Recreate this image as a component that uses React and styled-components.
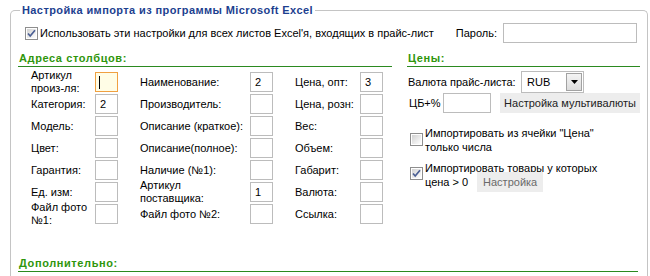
import styled, { createGlobalStyle } from "styled-components";

const GlobalStyle = createGlobalStyle`
  html, body { margin: 0; padding: 0; background: #fff; overflow: hidden; }
  body {
    font-family: "Liberation Sans", Arial, sans-serif;
    font-size: 11px;
    color: #000;
  }
`;

const Frame = styled.fieldset`
  box-sizing: border-box;
  margin: 3px 2px 0 10px;
  padding: 6px 7px 0 7px;
  height: 273px;
  border: 1px solid #c4c4c4;
  border-bottom: none;
  border-radius: 5px 5px 0 0;
  min-width: 0;
`;

const Legend = styled.legend`
  margin-left: 2px;
  padding: 0 2px;
  font-weight: bold;
  line-height: 14px;
  letter-spacing: 0.4px;
  color: #1d3f8f;
`;

const TopRow = styled.div`
  display: flex;
  align-items: center;
  height: 20px;
  padding-left: 7px;
`;

const CheckText = styled.div`
  margin-left: 2px;
  line-height: 14px;
`;

const PasswordLabel = styled.span`
  margin-left: auto;
  margin-right: 6px;
`;

const Field = styled.div`
  box-sizing: border-box;
  width: ${(p) => p.$w || 23}px;
  height: ${(p) => p.$h || 20}px;
  margin-right: ${(p) => p.$mr || 0}px;
  flex: none;
  border: 1px solid ${(p) => (p.$focused ? "#f0a040" : "#bcbcbc")};
  background: ${(p) => (p.$focused ? "#fffde6" : "#fff")};
  padding-left: 4px;
  line-height: 18px;
  display: flex;
  align-items: center;
`;

const Caret = styled.span`
  width: 1px;
  height: 13px;
  background: #000;
  margin-left: -1px;
`;

const Columns = styled.div`
  display: flex;
  margin-top: 8px;
`;

const Section = styled.div`
  width: ${(p) => p.$w}px;
  margin-left: ${(p) => p.$ml || 0}px;
`;

const Heading = styled.div`
  font-weight: bold;
  color: #2f960c;
  line-height: 14px;
  letter-spacing: 0.6px;
  padding: 0 0 1px 1px;
  border-bottom: 1px solid #2b8a20;
  margin-right: ${(p) => p.$mr || 0}px;
  margin-top: ${(p) => p.$mt || 0}px;
`;

const Grid = styled.div`
  display: grid;
  grid-template-columns: 87px 133px 88px;
  grid-auto-rows: 20px;
  column-gap: 22px;
  row-gap: 2px;
  padding-left: 13px;
  margin-top: 5px;
`;

const Cell = styled.div`
  display: flex;
  align-items: center;
`;

const Label = styled.span`
  width: ${(p) => p.$w}px;
  flex: none;
  line-height: 13px;
  white-space: pre-line;
`;

const Row = styled.div`
  display: flex;
  align-items: center;
  margin-top: ${(p) => p.$mt || 0}px;
  padding-left: ${(p) => p.$pl || 0}px;
`;

const Select = styled.div`
  box-sizing: border-box;
  width: 63px;
  height: 22px;
  border: 1px solid #bcbcbc;
  display: flex;
  align-items: center;
  justify-content: space-between;
  padding: 0 1px 0 5px;
`;

const DropButton = styled.div`
  box-sizing: border-box;
  width: 16px;
  height: 18px;
  border: 1px solid #a2a2a2;
  background: linear-gradient(#f4f4f4, #dcdcdc);
  display: flex;
  align-items: center;
  justify-content: center;
`;

const Button = styled.span`
  display: inline-flex;
  align-items: center;
  justify-content: center;
  box-sizing: border-box;
  flex: none;
  width: ${(p) => p.$w}px;
  height: 20px;
  margin-left: ${(p) => p.$ml || 0}px;
  background: #ededed;
  color: ${(p) => (p.$muted ? "#6a6a6a" : "#222")};
`;

const CheckRow = styled.div`
  display: flex;
  align-items: flex-start;
  margin-top: ${(p) => p.$mt || 0}px;
  padding-left: 3px;
`;

const CheckBoxWrap = styled.span`
  flex: none;
  margin-top: ${(p) => p.$mt || 0}px;
  display: flex;
`;

const SecondLine = styled.div`
  display: flex;
  align-items: center;
  margin-top: -3px;
`;

function CheckBox({ checked, mt }) {
  const id = checked ? "cbg1" : "cbg0";
  return (
    <CheckBoxWrap $mt={mt}>
      <svg width="13" height="13" viewBox="0 0 13 13">
        <defs>
          <linearGradient id={id} x1="0" y1="0" x2="1" y2="1">
            <stop offset="0" stopColor="#d2d2d2" />
            <stop offset="1" stopColor="#ffffff" />
          </linearGradient>
        </defs>
        <rect x="0.5" y="0.5" width="12" height="12" fill="#fff" stroke="#8e8e8e" />
        <rect x="2" y="2" width="9" height="9" fill={`url(#${id})`} />
        {checked && (
          <path d="M3 6.5 L5.2 9 L10 3.2" fill="none" stroke="#4b5f94" strokeWidth="1.7" />
        )}
      </svg>
    </CheckBoxWrap>
  );
}

const fields = [
  ["Артикул\nпроиз-ля:", "", true],
  ["Наименование:", "2"],
  ["Цена, опт:", "3"],
  ["Категория:", "2"],
  ["Производитель:", ""],
  ["Цена, розн:", ""],
  ["Модель:", ""],
  ["Описание (краткое):", ""],
  ["Вес:", ""],
  ["Цвет:", ""],
  ["Описание(полное):", ""],
  ["Объем:", ""],
  ["Гарантия:", ""],
  ["Наличие (№1):", ""],
  ["Габарит:", ""],
  ["Ед. изм:", ""],
  ["Артикул\nпоставщика:", "1"],
  ["Валюта:", ""],
  ["Файл фото\n№1:", ""],
  ["Файл фото №2:", ""],
  ["Ссылка:", ""],
];

const labelWidths = [64, 110, 65];

export default function App() {
  return (
    <>
      <GlobalStyle />
      <Frame>
        <Legend>Настройка импорта из программы Microsoft Excel</Legend>
        <TopRow>
          <CheckBox checked />
          <CheckText>Использовать эти настройки для всех листов Excel'я, входящих в прайс-лист</CheckText>
          <PasswordLabel>Пароль:</PasswordLabel>
          <Field $w={134} $mr={3} />
        </TopRow>

        <Columns>
          <Section $w={374}>
            <Heading>Адреса столбцов:</Heading>
            <Grid>
              {fields.map(([label, value, focused], i) => (
                <Cell key={label}>
                  <Label $w={labelWidths[i % 3]}>{label}</Label>
                  <Field $focused={focused}>{focused ? <Caret /> : value}</Field>
                </Cell>
              ))}
            </Grid>
          </Section>

          <Section $w={233} $ml={15}>
            <Heading>Цены:</Heading>
            <Row $mt={4} $pl={1}>
              <Label $w={113}>Валюта прайс-листа:</Label>
              <Select>
                RUB
                <DropButton>
                  <svg width="7" height="4" viewBox="0 0 7 4">
                    <path d="M0 0 H7 L3.5 4 Z" fill="#000" />
                  </svg>
                </DropButton>
              </Select>
            </Row>
            <Row $pl={2}>
              <Label $w={34}>ЦБ+%</Label>
              <Field $w={48} />
              <Button $w={140} $ml={9}>Настройка мультивалюты</Button>
            </Row>
            <CheckRow $mt={13}>
              <CheckBox mt={7} />
              <CheckText>
                Импортировать из ячейки "Цена"
                <br />
                только числа
              </CheckText>
            </CheckRow>
            <CheckRow $mt={7}>
              <CheckBox checked mt={6} />
              <CheckText>
                <div>Импортировать товары у которых</div>
                <SecondLine>
                  цена &gt; 0
                  <Button $w={66} $ml={9} $muted>Настройка</Button>
                </SecondLine>
              </CheckText>
            </CheckRow>
          </Section>
        </Columns>

        <Heading $mr={2} $mt={32}>Дополнительно:</Heading>
      </Frame>
    </>
  );
}
